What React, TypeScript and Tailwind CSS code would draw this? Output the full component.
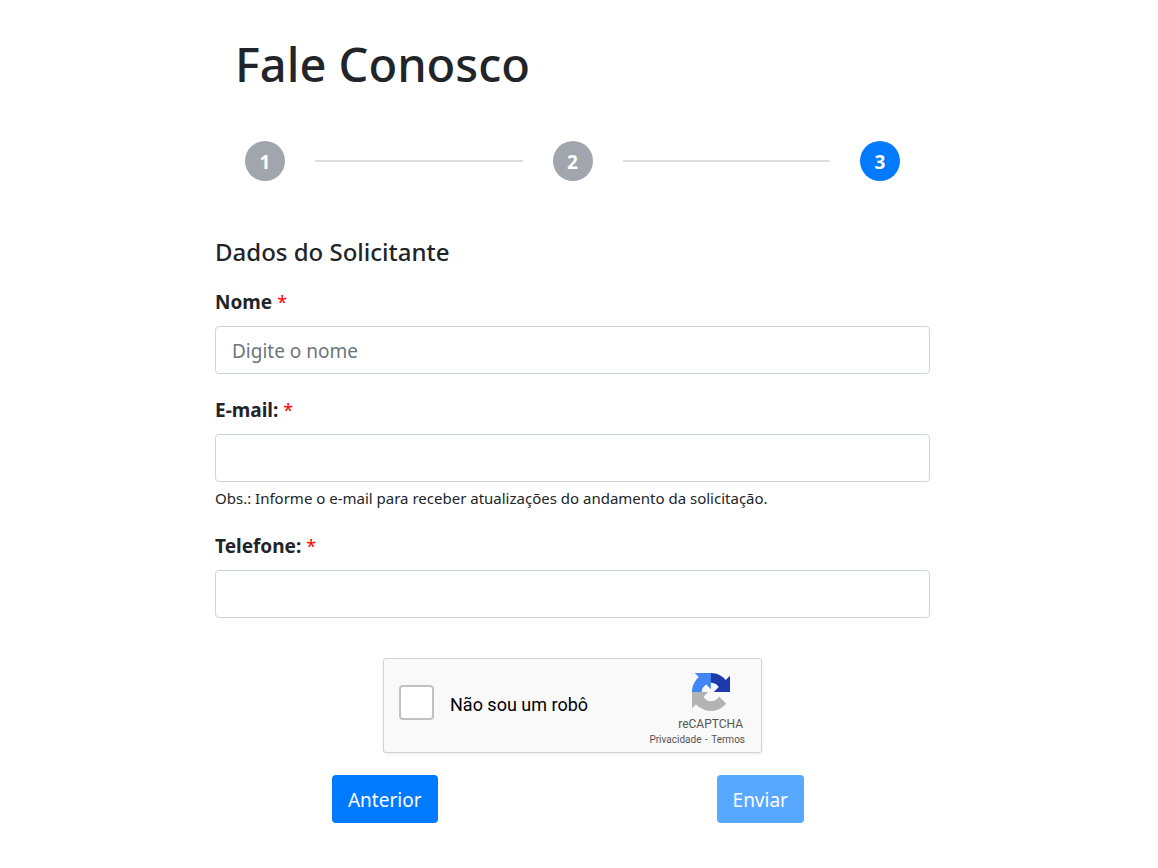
import { useState } from 'react'

const steps = [1, 2, 3]

const labelClass = 'block font-bold text-[19px] leading-7'
const inputClass =
  'mt-2.5 block w-full h-12 px-4 pt-0.5 rounded border border-[#ced4da] bg-white text-[19px] text-[#495057] placeholder:text-[#6c757d] placeholder:opacity-100 focus:border-[#80bdff] focus:outline-none'

function Required() {
  return <span className="text-[18px] leading-none font-normal text-[#ff0000]">*</span>
}

function Stepper({ current }: { current: number }) {
  return (
    <ol className="mt-[45px] flex items-center gap-[30px] px-[30px]">
      {steps.map((step) => (
        <li key={step} className={step > 1 ? 'flex flex-1 items-center gap-[30px]' : 'flex'}>
          {step > 1 && <span className="h-0.5 flex-1 bg-[#dfdfdf]" />}
          <span
            className={`flex size-10 items-center justify-center rounded-full pt-0.5 text-[19px] font-bold text-white ${
              step === current ? 'bg-[#007bff]' : 'bg-[#a1a6ac]'
            }`}
          >
            {step}
          </span>
        </li>
      ))}
    </ol>
  )
}

function RecaptchaLogo() {
  return (
    <svg viewBox="0 0 64 64" className="size-[38px]" aria-hidden="true">
      <path
        fill="#1c3aa9"
        d="M64 31.955l-.033-1.37V4.687l-7.16 7.16C50.948 4.674 42.033.093 32.05.093c-10.4 0-19.622 4.96-25.458 12.64l11.736 11.86a15.55 15.55 0 0 1 4.754-5.334c2.05-1.6 4.952-2.906 8.968-2.906.485 0 .86.057 1.135.163 4.976.393 9.288 3.14 11.828 7.124l-8.307 8.307L64 31.953"
      />
      <path
        fill="#4285f4"
        d="M31.862.094l-1.37.033H4.594l7.16 7.16C4.58 13.147 0 22.06 0 32.046c0 10.4 4.96 19.622 12.64 25.458L24.5 45.768a15.55 15.55 0 0 1-5.334-4.754c-1.6-2.05-2.906-4.952-2.906-8.968 0-.485.057-.86.163-1.135.393-4.976 3.14-9.288 7.124-11.828l8.307 8.307L31.86.095"
      />
      <path
        fill="#b3b3b3"
        d="M.001 32.045l.033 1.37v25.898l7.16-7.16c5.86 7.173 14.774 11.754 24.76 11.754 10.4 0 19.622-4.96 25.458-12.64l-11.736-11.86a15.55 15.55 0 0 1-4.754 5.334c-2.05 1.6-4.952 2.906-8.968 2.906-.485 0-.86-.057-1.135-.163-4.976-.393-9.288-3.14-11.828-7.124l8.307-8.307c-10.522.04-22.4.066-27.295-.005"
      />
    </svg>
  )
}

function Recaptcha({ checked, onChange }: { checked: boolean; onChange: (checked: boolean) => void }) {
  return (
    <div className="mx-auto mt-10 flex h-[95px] max-w-[379px] justify-between rounded-[3px] border border-[#d3d3d3] bg-[#f9f9f9] pr-4 pl-[15px] font-['Roboto',sans-serif] shadow-[0_1px_3px_0_rgba(0,0,0,0.08)]">
      <div className="flex items-center gap-4">
        <input
          id="robo"
          type="checkbox"
          checked={checked}
          onChange={(e) => onChange(e.target.checked)}
          className="mb-1.5 size-[35px] appearance-none rounded-sm border-2 border-[#c1c1c1] bg-white checked:bg-[#4285f4]"
        />
        <label htmlFor="robo" className="mb-0.5 text-[18px] leading-6 text-black">
          Não sou um robô
        </label>
      </div>
      <div className="flex flex-col items-end pt-3.5 text-[#555555]">
        <div className="flex flex-col items-center pr-0.5">
          <RecaptchaLogo />
          <span className="mt-[5px] text-[12px] leading-4">reCAPTCHA</span>
        </div>
        <div className="mt-0.5 text-[10px] leading-3">
          <a href="#privacidade">Privacidade</a>
          <span className="px-px"> - </span>
          <a href="#termos">Termos</a>
        </div>
      </div>
    </div>
  )
}

export default function App() {
  const [human, setHuman] = useState(false)

  return (
    <main className="min-h-screen bg-white pr-[13px] font-['Segoe_UI','Noto_Sans',sans-serif] text-[#212529]">
      <form className="mx-auto max-w-[715px] pt-8 pb-11" onSubmit={(e) => e.preventDefault()}>
        <h1 className="px-5 text-[47px] leading-16 font-medium">Fale Conosco</h1>

        <Stepper current={3} />

        <h2 className="mt-[55px] text-[24px] leading-8 font-medium">Dados do Solicitante</h2>

        <div className="mt-5">
          <label htmlFor="nome" className={labelClass}>
            Nome <Required />
          </label>
          <input id="nome" type="text" placeholder="Digite o nome" className={inputClass} />
        </div>

        <div className="mt-[22px]">
          <label htmlFor="email" className={labelClass}>
            E-mail: <Required />
          </label>
          <input id="email" type="email" className={inputClass} />
          <small className="mt-1 block text-[15px] leading-6">
            Obs.: Informe o e-mail para receber atualizações do andamento da solicitação.
          </small>
        </div>

        <div className="mt-[22px]">
          <label htmlFor="telefone" className={labelClass}>
            Telefone: <Required />
          </label>
          <input id="telefone" type="tel" className={inputClass} />
        </div>

        <Recaptcha checked={human} onChange={setHuman} />

        <div className="-mx-[18px] mt-[22px] grid grid-cols-2 justify-items-center">
          <button type="button" className="h-12 rounded bg-[#007bff] px-4 pt-0.5 text-[19px] text-white">
            Anterior
          </button>
          <button
            type="submit"
            disabled={!human}
            className="h-12 rounded bg-[#007bff] px-4 pt-0.5 text-[19px] text-white disabled:opacity-65"
          >
            Enviar
          </button>
        </div>
      </form>
    </main>
  )
}
